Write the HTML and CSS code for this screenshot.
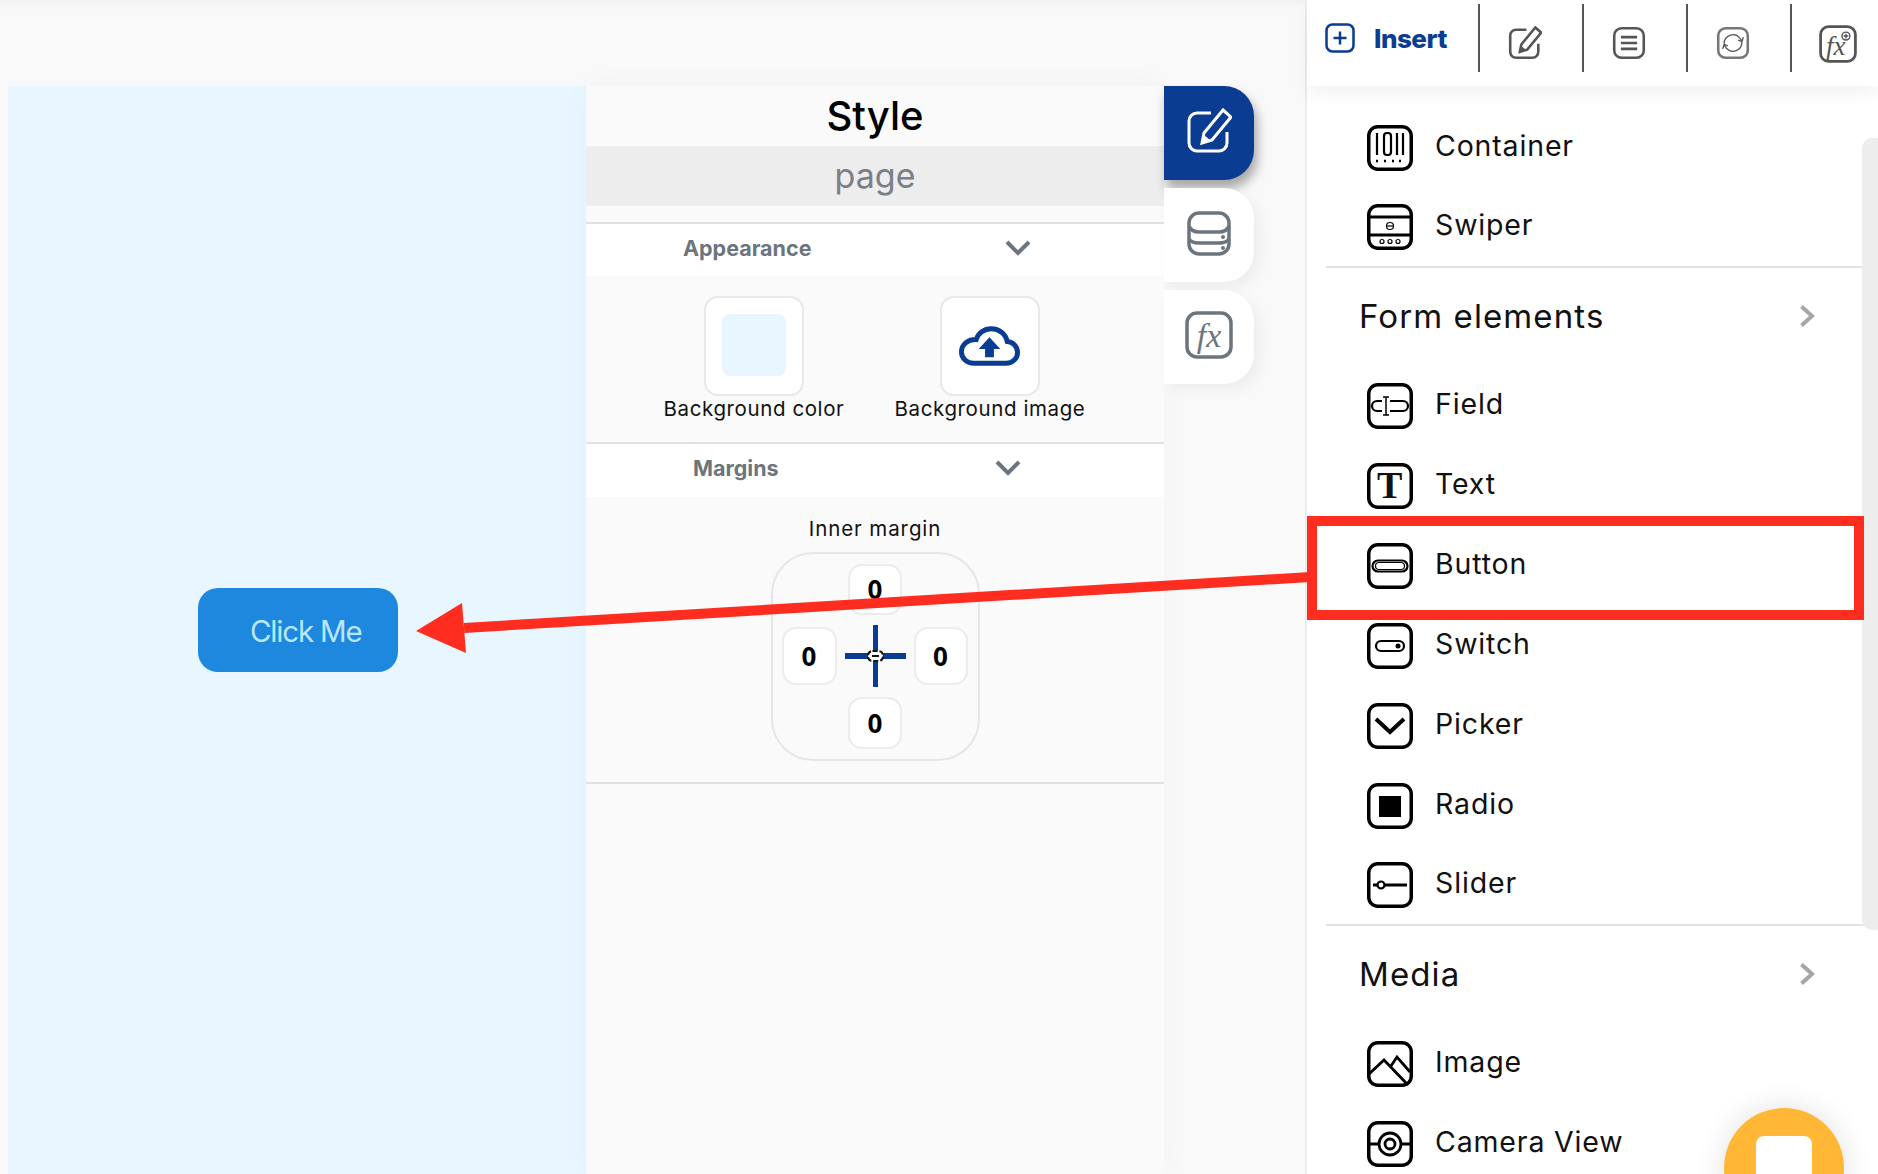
FILE: index.html
```html
<!DOCTYPE html>
<html lang="en">
<head>
<meta charset="utf-8">
<title>Insert</title>
<link rel="stylesheet" href="styles.css">
</head>
<body>
<div class="app">
  <main class="workspace">
    <section class="canvas">
      <button class="click-btn">Click Me</button>
    </section>
    <section class="style-panel">
      <h1 class="panel-title">Style</h1>
      <div class="panel-sub">page</div>
      <div class="prop-section">
        <div class="prop-head prop-head-appearance">
          <span>Appearance</span>
          <svg class="chev-down" viewBox="0 0 26 16"><path d="M2 2l11 11L24 2"/></svg>
        </div>
        <div class="bg-grid">
          <div class="bg-item">
            <div class="bg-card bg-card-color"><div class="swatch"></div></div>
            <div class="bg-label">Background color</div>
          </div>
          <div class="bg-item">
            <div class="bg-card">
              <svg class="cloud" viewBox="0 0 62 40"><path class="cloud-line" d="M15 37.500h33c6.500 0 11.500-5 11.500-11 0-6-4.500-10.500-10.500-11C47.500 7.500 40.500 2.500 33 2.500c-7.500 0-13.500 4.500-15.500 11C9 13 2.500 18.500 2.500 26c0 6.500 5.500 11.500 12.500 11.500z"/><path class="cloud-fill" d="M31 11l11 12h-6.500v8.500h-9V23H20z"/></svg>
            </div>
            <div class="bg-label">Background image</div>
          </div>
        </div>
      </div>
      <div class="prop-section prop-section-last">
        <div class="prop-head prop-head-margins">
          <span>Margins</span>
          <svg class="chev-down" viewBox="0 0 26 16"><path d="M2 2l11 11L24 2"/></svg>
        </div>
        <div class="margin-body">
          <div class="margin-label">Inner margin</div>
          <div class="margin-box">
            <div class="m-input m-top">0</div>
            <div class="m-input m-left">0</div>
            <svg class="m-cross" viewBox="0 0 61 62">
              <rect x="28" y="0" width="5" height="62" fill="#0a3d91"/>
              <rect x="0" y="28" width="61" height="6" fill="#0a3d91"/>
              <rect x="23" y="26" width="15" height="10" rx="4.500" fill="#fff" stroke="#111" stroke-width="2" stroke-dasharray="5 2"/>
              <path d="M27 31h7" stroke="#111" stroke-width="2"/>
            </svg>
            <div class="m-input m-right">0</div>
            <div class="m-input m-bottom">0</div>
          </div>
        </div>
      </div>
    </section>
    <nav class="tabs">
      <div class="tab tab-active">
        <svg class="tab-icon" viewBox="0 0 46 46"><path class="ln-white" d="M25 5H11a8 8 0 0 0-8 8v22a8 8 0 0 0 8 8h22a8 8 0 0 0 8-8V24"/><path class="ln-white" d="M37 2l8 7-19 23-10 3 2-10z"/><path class="fill-white" d="M16 35l2-8 6 5z"/></svg>
      </div>
      <div class="tab">
        <svg class="tab-icon" viewBox="0 0 46 46"><rect class="ln-grey" x="3" y="3" width="40" height="41" rx="10"/><path class="ln-grey" d="M3 16c2 5 6 6 10 6h20c4 0 8-1 10-6M3 29c2 3 6 4 10 4h20c4 0 8-1 10-4"/><circle class="fill-grey" cx="37" cy="27" r="2"/><circle class="fill-grey" cx="37" cy="38" r="2"/></svg>
      </div>
      <div class="tab">
        <svg class="tab-icon tab-icon-fx" viewBox="0 0 48 48"><rect class="ln-grey" x="2" y="2" width="44" height="44" rx="10"/><text class="fx-text fx-grey" x="24" y="36" text-anchor="middle">fx</text></svg>
      </div>
    </nav>
  </main>

  <aside class="sidebar">
    <header class="toolbar">
      <div class="insert-tab">
        <svg class="insert-icon" viewBox="0 0 30 30"><rect x="1.500" y="1.500" width="27" height="27" rx="6"/><path d="M15 8.500v13M8.500 15h13"/></svg>
        <span>Insert</span>
      </div>
      <div class="tool">
        <svg class="tool-icon" viewBox="0 0 46 46"><path class="ln-dark" d="M25 5H11a8 8 0 0 0-8 8v22a8 8 0 0 0 8 8h22a8 8 0 0 0 8-8V24"/><path class="ln-dark" d="M37 2l8 7-19 23-10 3 2-10z"/><path class="fill-dark" d="M16 35l2-8 6 5z"/></svg>
      </div>
      <div class="tool">
        <svg class="tool-icon" viewBox="0 0 46 46"><rect class="ln-dark" x="3" y="3" width="40" height="40" rx="10"/><path class="ln-dark" d="M12 15h22M12 23h22M12 31h22"/></svg>
      </div>
      <div class="tool">
        <svg class="tool-icon" viewBox="0 0 46 46"><rect class="ln-dark-thin" x="3" y="3" width="40" height="40" rx="10"/><path class="ln-dark-1" d="M11 24a12 12 0 0 1 21-8l3 4M35 22a12 12 0 0 1-21 8l-3-4"/><path class="ln-dark-1" d="M37 15l-2 6-5-2M9 31l2-6 5 2"/></svg>
      </div>
      <div class="tool tool-last">
        <svg class="tool-icon-fx" viewBox="0 0 48 48"><rect class="ln-dark" x="2" y="2" width="44" height="44" rx="10"/><text class="fx-text fx-dark" x="21" y="38" text-anchor="middle">fx</text><circle class="ln-dark-1" cx="34" cy="14" r="5"/><path class="ln-dark-1" d="M31 14h6M34 11v6"/></svg>
      </div>
    </header>

    <div class="list">
      <div class="row">
        <svg class="ico" viewBox="0 0 46 46"><rect class="ln" x="1.750" y="1.750" width="42.500" height="42.500" rx="9"/><path class="ln-2" d="M10 8v22M30 8v22M36 8v22"/><rect class="ln-2" x="17" y="8" width="7" height="22" rx="3"/><path class="dots" d="M9 36h2M17 36h2M25 36h2M32 36h2"/></svg>
        <span>Container</span>
      </div>
      <div class="row row-end">
        <svg class="ico" viewBox="0 0 46 46"><rect class="ln" x="1.750" y="1.750" width="42.500" height="42.500" rx="9"/><path class="ln-3" d="M2 13h42M2 31h42"/><circle class="ln-1" cx="23" cy="22" r="3.500"/><path class="ln-1" d="M20 22h6"/><circle class="ln-1" cx="15" cy="37.500" r="2"/><circle class="ln-1" cx="23" cy="37.500" r="2"/><circle class="ln-1" cx="31" cy="37.500" r="2"/></svg>
        <span>Swiper</span>
      </div>

      <div class="group-head">
        <span>Form elements</span>
        <svg class="chev-right" viewBox="0 0 16 24"><path d="M2.500 2.500L13 12 2.500 21.500"/></svg>
      </div>

      <div class="row">
        <svg class="ico" viewBox="0 0 46 46"><rect class="ln" x="1.750" y="1.750" width="42.500" height="42.500" rx="9"/><path class="ln-2" d="M15 18H10a5 5 0 0 0 0 10h5M23 18h13a5 5 0 0 1 0 10H23"/><path class="ln-15" d="M16 14h6M19 14v18M16 32h6"/></svg>
        <span>Field</span>
      </div>
      <div class="row">
        <svg class="ico" viewBox="0 0 46 46"><rect class="ln" x="1.750" y="1.750" width="42.500" height="42.500" rx="9"/><text class="t-glyph" x="23" y="35" text-anchor="middle">T</text></svg>
        <span>Text</span>
      </div>
      <div class="row">
        <svg class="ico" viewBox="0 0 46 46"><rect class="ln" x="1.750" y="1.750" width="42.500" height="42.500" rx="9"/><rect class="ln-2" x="5.500" y="17.500" width="35" height="11" rx="5.500"/><rect class="ln-1" x="8.500" y="19.500" width="29" height="7" rx="3.500"/></svg>
        <span>Button</span>
      </div>
      <div class="row">
        <svg class="ico" viewBox="0 0 46 46"><rect class="ln" x="1.750" y="1.750" width="42.500" height="42.500" rx="9"/><rect class="ln-2" x="9" y="18" width="28" height="10" rx="5"/><circle class="dot" cx="31" cy="23" r="2.500"/></svg>
        <span>Switch</span>
      </div>
      <div class="row">
        <svg class="ico" viewBox="0 0 46 46"><rect class="ln" x="1.750" y="1.750" width="42.500" height="42.500" rx="9"/><path class="ln-4" d="M9 16l14 13 14-13"/></svg>
        <span>Picker</span>
      </div>
      <div class="row">
        <svg class="ico" viewBox="0 0 46 46"><rect class="ln" x="1.750" y="1.750" width="42.500" height="42.500" rx="9"/><rect class="dot" x="12" y="13" width="22" height="21"/></svg>
        <span>Radio</span>
      </div>
      <div class="row row-end">
        <svg class="ico" viewBox="0 0 46 46"><rect class="ln" x="1.750" y="1.750" width="42.500" height="42.500" rx="9"/><circle class="ln-2" cx="14" cy="23" r="3.500"/><path class="ln-3" d="M18 23h22M6 23h4"/></svg>
        <span>Slider</span>
      </div>

      <div class="group-head">
        <span>Media</span>
        <svg class="chev-right" viewBox="0 0 16 24"><path d="M2.500 2.500L13 12 2.500 21.500"/></svg>
      </div>

      <div class="row">
        <svg class="ico" viewBox="0 0 46 46"><rect class="ln" x="1.750" y="1.750" width="42.500" height="42.500" rx="9"/><path class="ln-3" d="M2 33l15-14 24 25M24 25l6-9 13 15"/></svg>
        <span>Image</span>
      </div>
      <div class="row">
        <svg class="ico" viewBox="0 0 46 46"><rect class="ln" x="1.750" y="1.750" width="42.500" height="42.500" rx="9"/><path class="ln-3" d="M2 23h9M35 23h9"/><circle class="ln-3" cx="23" cy="23" r="11"/><circle class="ln-3" cx="23" cy="23" r="5"/></svg>
        <span>Camera View</span>
      </div>
    </div>
    <div class="scroll-thumb"></div>
  </aside>

  <div class="red-box"></div>
  <svg class="arrow" viewBox="0 0 1878 1174"><path d="M1310 577L464 628" stroke="#ff2d20" stroke-width="10" fill="none"/><path d="M416 631L462 603 466 653z" fill="#ff2d20"/></svg>
  <div class="fab"><div class="fab-square"></div></div>
</div>
</body>
</html>
```
FILE: styles.css
```css
* { box-sizing: border-box; }
html, body { margin: 0; padding: 0; }
body { font-family: "Inter", "Liberation Sans", sans-serif; color: #111; }

.app {
  position: relative;
  display: flex;
  width: 1878px;
  height: 1174px;
  overflow: hidden;
  background: #f8f8f8;
}

.workspace {
  display: flex;
  flex: none;
  align-items: flex-start;
  width: 1305px;
  height: 1174px;
  padding: 86px 0 0 8px;
  background: linear-gradient(#f2f2f2 0, #f9f9f9 10px);
}

.canvas {
  width: 578px;
  height: 1088px;
  padding: 502px 0 0 190px;
  background: #e8f7ff;
}
.click-btn {
  display: block;
  width: 200px;
  height: 84px;
  padding: 2px 0 0 52px;
  text-align: left;
  border: 0;
  border-radius: 20px;
  background: #1e88df;
  color: #b9e7ff;
  font-family: "Inter", sans-serif;
  font-size: 29.500px;
  letter-spacing: -1.200px;
}

.style-panel {
  width: 578px;
  height: 1088px;
  background: #fafafa;
  box-shadow: 0 0 30px rgba(0,0,0,.03);
}
.panel-title {
  display: flex;
  align-items: center;
  justify-content: center;
  height: 60px;
  margin: 0;
  padding-bottom: 2px;
  font-size: 40px;
  font-weight: 500;
  color: #000;
}
.panel-sub {
  display: flex;
  align-items: center;
  justify-content: center;
  height: 60px;
  margin-bottom: 16px;
  padding-bottom: 2px;
  background: #ededed;
  color: #7b8087;
  font-size: 34px;
}
.prop-section { border-top: 2px solid #e2e2e2; }
.prop-section-last { border-bottom: 2px solid #e2e2e2; }
.prop-head {
  display: flex;
  align-items: center;
  height: 52px;
  padding-bottom: 4px;
  background: #fff;
  color: #6c757d;
  font-size: 21.500px;
  font-weight: 700;
}
.prop-head-appearance { padding-left: 97px; gap: 194px; }
.prop-head-margins { padding-left: 107px; gap: 216px; height: 53px; padding-bottom: 6px; }
.chev-down { width: 26px; height: 16px; }
.chev-down path { fill: none; stroke: #6c757d; stroke-width: 4; }

.bg-grid {
  display: grid;
  grid-template-columns: 236px 236px;
  height: 166px;
  padding: 20px 0 0 50px;
}
.bg-item { display: flex; flex-direction: column; align-items: center; }
.bg-card {
  display: flex;
  align-items: center;
  justify-content: center;
  width: 100px;
  height: 100px;
  background: #fff;
  border: 2px solid #e8e8e8;
  border-radius: 14px;
}
.bg-card-color { padding-bottom: 2px; }
.swatch { width: 64px; height: 62px; border-radius: 8px; background: #e8f7ff; }
.cloud { width: 61px; height: 40px; margin: 0 2px 1px 0; }
.cloud-line { fill: none; stroke: #0a3d91; stroke-width: 5; }
.cloud-fill { fill: #0a3d91; }
.bg-label { margin-top: -1px; font-size: 20.500px; letter-spacing: 0.6px; line-height: 28px; color: #111; white-space: nowrap; }

.margin-body {
  display: flex;
  flex-direction: column;
  align-items: center;
  height: 285px;
}
.margin-label { height: 55px; padding-top: 18px; font-size: 20.500px; letter-spacing: 0.9px; line-height: 28px; }
.margin-box {
  display: grid;
  grid-template-columns: 55px 54px 54px;
  grid-template-rows: 51px 58px 52px;
  gap: 12px 11.500px;
  width: 209px;
  height: 209px;
  padding: 10px 9px;
  border: 2px solid #e6e6e6;
  border-radius: 42px;
}
.m-input {
  display: flex;
  align-items: center;
  justify-content: center;
  padding-bottom: 1px;
  background: #fff;
  border: 2px solid #ececec;
  border-radius: 14px;
  font-family: "Noto Sans", sans-serif;
  font-size: 26px;
  font-weight: 700;
  color: #000;
}
.m-top { grid-column: 2; grid-row: 1; }
.m-left { grid-column: 1; grid-row: 2; }
.m-right { grid-column: 3; grid-row: 2; }
.m-bottom { grid-column: 2; grid-row: 3; }
.m-cross { grid-column: 2; grid-row: 2; place-self: center; width: 61px; height: 62px; flex: none; }

.tabs {
  display: flex;
  flex-direction: column;
  gap: 8px;
  width: 90px;
}
.tab {
  display: flex;
  align-items: center;
  justify-content: center;
  height: 94px;
  padding-bottom: 4px;
  background: #fff;
  border-radius: 0 30px 30px 0;
  box-shadow: 6px 6px 14px rgba(0,0,0,.05);
}
.tab-active { background: #0a3d91; box-shadow: 3px 8px 12px rgba(0,0,0,.35); }
.tab-icon { width: 46px; height: 46px; }
.tab-icon-fx { width: 48px; height: 48px; }
.ln-white { fill: none; stroke: #fff; stroke-width: 3; }
.fill-white { fill: #fff; }
.ln-grey { fill: none; stroke: #6c757d; stroke-width: 3.500; }
.fill-grey { fill: #6c757d; }
.fx-text { font-family: "Liberation Serif", serif; font-style: italic; font-size: 34px; }
.fx-grey { fill: #6c757d; }
.fx-dark { fill: #555; }

.sidebar {
  position: relative;
  flex: none;
  width: 573px;
  background: #fff;
  border-left: 2px solid #ececec;
}
.toolbar {
  position: relative;
  display: flex;
  align-items: flex-start;
  height: 86px;
  padding-top: 4px;
  background: #fff;
  box-shadow: 0 8px 16px rgba(0,0,0,.05);
}
.insert-tab {
  display: flex;
  flex: none;
  align-items: center;
  gap: 19px;
  width: 171px;
  height: 68px;
  padding: 0 0 0 18px;
  color: #0a3d91;
  font-size: 26px;
  font-weight: 800;
  letter-spacing: -0.5px;
}
.insert-icon { width: 30px; height: 30px; flex: none; }
.insert-icon rect, .insert-icon path { fill: none; stroke: #0a3d91; stroke-width: 2.500; }
.tool {
  display: flex;
  flex: none;
  align-items: center;
  justify-content: flex-start;
  width: 104px;
  height: 68px;
  padding: 10px 0 0 28px;
  border-left: 2px solid #555;
}
.tool-last { padding: 12px 0 0 27px; }
.tool-icon { width: 34px; height: 34px; }
.tool-icon-fx { width: 38px; height: 38px; flex: none; }
.ln-dark { fill: none; stroke: #555; stroke-width: 3.500; }
.ln-dark-thin { fill: none; stroke: #777; stroke-width: 3.500; }
.ln-dark-1 { fill: none; stroke: #555; stroke-width: 1.800; }
.fill-dark { fill: #555; }

.list { display: flex; flex-direction: column; padding: 22px 14px 0 19px; }
.row {
  display: flex;
  flex: none;
  align-items: center;
  gap: 22px;
  height: 80px;
  padding-left: 41px;
  font-size: 28.500px;
  letter-spacing: 0.85px;
  color: #111;
}
.row span { position: relative; top: -3px; }
.row-end { border-bottom: 2px solid #e2e2e2; }
.ico { width: 46px; height: 46px; flex: none; }
.ln { fill: none; stroke: #000; stroke-width: 3.500; }
.ln-1 { fill: none; stroke: #000; stroke-width: 1.200; }
.ln-15 { fill: none; stroke: #000; stroke-width: 1.500; }
.ln-2 { fill: none; stroke: #000; stroke-width: 2.200; }
.ln-3 { fill: none; stroke: #000; stroke-width: 2.800; }
.ln-4 { fill: none; stroke: #000; stroke-width: 4; }
.dots { fill: none; stroke: #000; stroke-width: 2.500; }
.dot { fill: #000; }
.t-glyph { font-family: "Liberation Serif", serif; font-weight: 700; font-size: 38px; fill: #111; }

.group-head {
  display: flex;
  flex: none;
  align-items: center;
  justify-content: space-between;
  height: 98px;
  padding: 0 49px 0 33px;
  font-size: 33px;
  letter-spacing: 1.100px;
}
.group-head span { position: relative; top: -1px; }
.chev-right { width: 16px; height: 24px; margin-bottom: 2px; }
.chev-right path { fill: none; stroke: #a6a6a6; stroke-width: 4; }

.scroll-thumb {
  position: absolute;
  top: 138px;
  right: 0;
  width: 16px;
  height: 792px;
  background: #ededed;
  border-radius: 10px 0 0 10px;
}

.red-box {
  position: absolute;
  left: 1307px;
  top: 516px;
  width: 557px;
  height: 104px;
  border: 10px solid #ff2d20;
}
.arrow {
  position: absolute;
  left: 0;
  top: 0;
  width: 1878px;
  height: 1174px;
  pointer-events: none;
}
.fab {
  position: absolute;
  left: 1724px;
  top: 1108px;
  width: 120px;
  height: 120px;
  padding: 28px 0 0 32px;
  border-radius: 50%;
  background: #ffb735;
  box-shadow: 0 0 30px rgba(0,0,0,.12);
}
.fab-square { width: 56px; height: 56px; border-radius: 8px; background: #fff; }
```
